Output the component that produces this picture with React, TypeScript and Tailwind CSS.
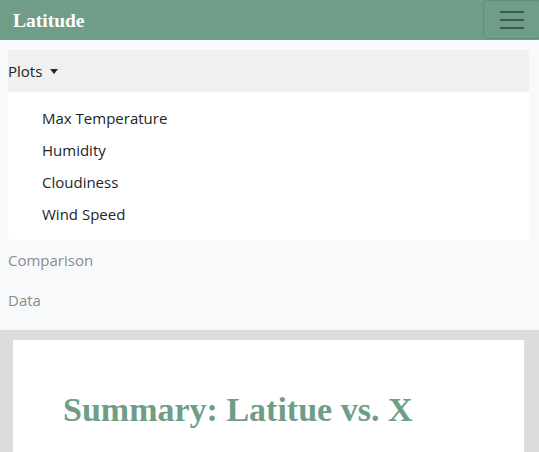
import React from "react";

export default function App() {
  const sans = { fontFamily: '"Segoe UI", "Open Sans", "Noto Sans", sans-serif' };
  return (
    <div className="w-[539px] h-[452px] overflow-hidden bg-[#dcdcdc]" style={sans}>
      <nav className="bg-[#6f9d88] h-[40px] flex items-center justify-between pl-[13px]">
        <span className="text-white font-bold text-[19.5px] leading-none pt-[2px]" style={{ fontFamily: '"Liberation Serif", "Times New Roman", serif' }}>
          Latitude
        </span>
        <button className="h-[39px] w-[58px] mr-[-2px] self-start rounded-[4px] border border-[#5f8b77] flex flex-col items-center justify-center gap-[6px]">
          <span className="block w-[24px] h-[2px] bg-[#3b5a4c]" />
          <span className="block w-[24px] h-[2px] bg-[#3b5a4c]" />
          <span className="block w-[24px] h-[2px] bg-[#3b5a4c]" />
        </button>
      </nav>
      <div className="bg-[#f8f9fa] pt-[10px] pl-[8px] pr-[10px] pb-[10px]">
        <div className="bg-[#f0f0f0] h-[42px] flex items-center text-[15px] text-[#212529]">
          Plots
          <span className="ml-[8px] inline-block w-0 h-0 border-l-[4.5px] border-r-[4.5px] border-t-[5px] border-l-transparent border-r-transparent border-t-[#212529]" />
        </div>
        <div className="bg-white rounded-b-[4px] pt-[10px] pb-[10px] flex flex-col text-[15px] text-[#212529]">
          <div className="h-[32px] flex items-center pl-[34px]">Max Temperature</div>
          <div className="h-[32px] flex items-center pl-[34px]">Humidity</div>
          <div className="h-[32px] flex items-center pl-[34px]">Cloudiness</div>
          <div className="h-[32px] flex items-center pl-[34px]">Wind Speed</div>
        </div>
        <div className="h-[40px] flex items-center text-[15px] text-[#888c90]">Comparison</div>
        <div className="h-[40px] flex items-center text-[15px] text-[#888c90]">Data</div>
      </div>
      <div className="pl-[13px] pr-[15px] pt-[10px]">
        <div className="bg-white h-[200px] pl-[50px] pt-[50px]">
          <h1 className="text-[34px] font-bold text-[#6f9d88] leading-[40px]" style={{ fontFamily: '"Liberation Serif", "Times New Roman", serif' }}>
            Summary: Latitue vs. X
          </h1>
        </div>
      </div>
    </div>
  );
}
